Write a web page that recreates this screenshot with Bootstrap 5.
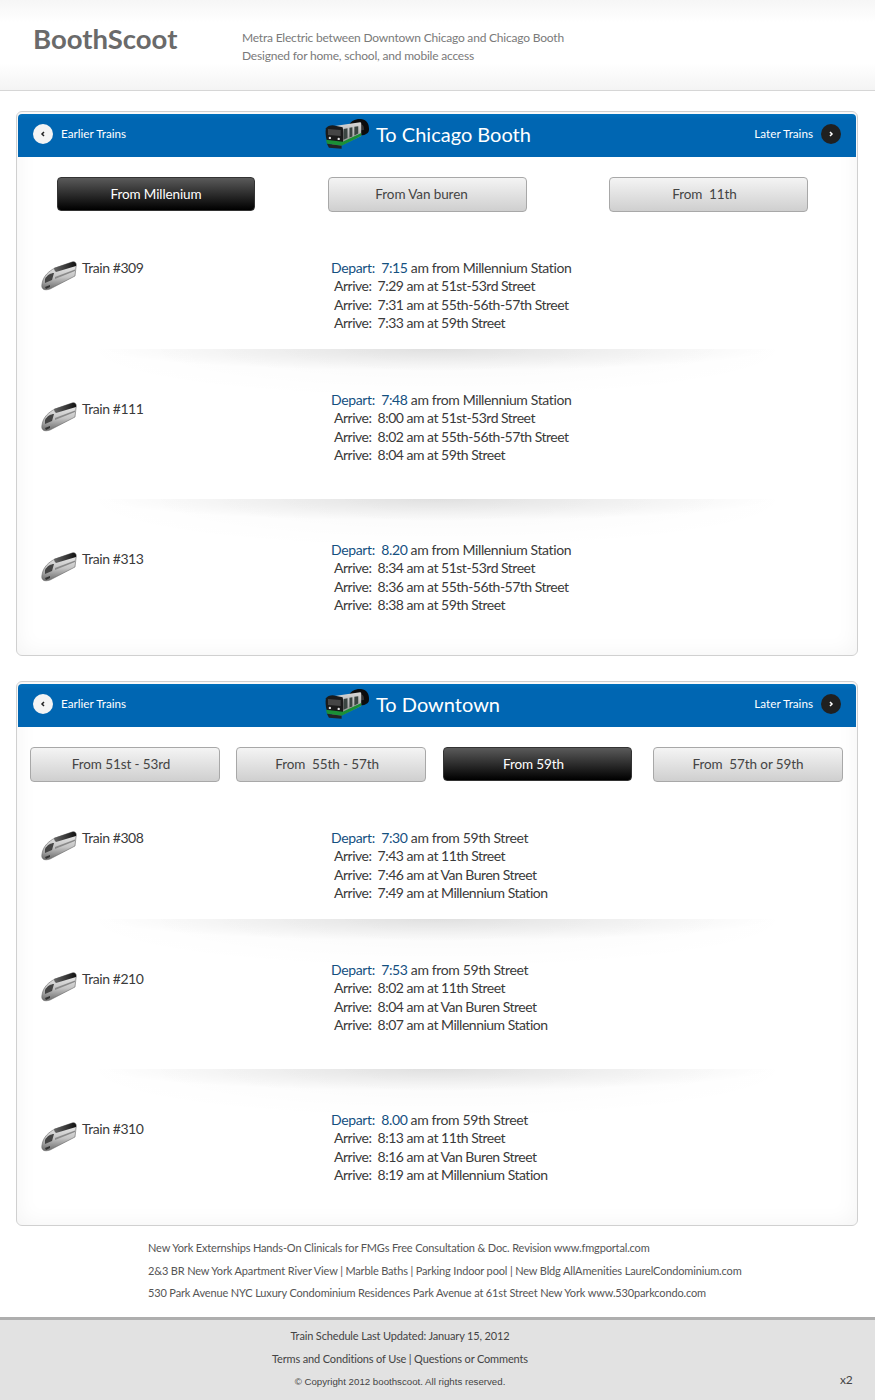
<!DOCTYPE html>
<html lang="en">
<head>
  <meta charset="UTF-8" />
  <meta name="viewport" content="width=device-width, initial-scale=1" />
  <title>BoothScoot</title>
  <link href="https://cdn.jsdelivr.net/npm/bootstrap@5.3.0/dist/css/bootstrap.min.css" rel="stylesheet" />
  <style>
    body {
      font-family: Lato, "Open Sans", sans-serif;
      color: #3a3a3a;
      background: #fff;
    }
    .site-head {
      height: 91px;
      padding: 0 0 0 33px;
      background: linear-gradient(to bottom, #f6f6f6, #fff 25%, #fff 70%, #f4f4f4);
      border-bottom: 1px solid #d6d6d6;
    }
    .brand {
      width: 209px;
      margin-bottom: 12px;
      font-size: 27.5px;
      font-weight: 700;
      color: #6a6a6a;
    }
    .tagline {
      margin-top: 4px;
      font-size: 12px;
      line-height: 18.4px;
      letter-spacing: -.2px;
      color: #7a7a7a;
    }
    .panel {
      height: 545px;
      margin: 20px 17px 0 16px;
      padding: 2px 1px;
      border: 1px solid #d0d0d0;
      border-radius: 6px;
      box-shadow: inset 0 0 22px rgba(0, 0, 0, .05);
    }
    .panel + .panel {
      margin-top: 25px;
    }
    .bar {
      height: 43px;
      padding: 0 15px 3px;
      color: #fff;
      background: linear-gradient(to bottom, #0070bd, #0066b2 15%);
      border-radius: 4px 4px 0 0;
    }
    .bar-link {
      width: 150px;
      font-size: 11.7px;
      gap: 8px;
    }
    .arrow {
      width: 20px;
      height: 20px;
    }
    .bar-title {
      margin-left: 142px;
      font-size: 20px;
      gap: 6px;
    }
    .tram {
      width: 45px;
      height: 32px;
    }
    .choice {
      height: 35px;
      padding: 0;
      font-size: 13.5px;
      line-height: 27px;
      letter-spacing: -.1px;
      white-space: pre;
      color: #444;
      background: linear-gradient(to bottom, #f4f4f4, #cfcfcf);
      border: 1px solid #a8a8a8;
      border-radius: 4px;
    }
    .choice.on {
      height: 34px;
      margin-right: 1px;
      color: #fff;
      background: linear-gradient(to bottom, #5a5a5a, #000);
      border-color: #333;
    }
    .choice.shift-l { padding-right: 12px; }
    .choice.shift-m { padding-right: 8px; }
    .choices {
      margin-top: 20px;
    }
    .w-big { width: 199px; }
    .w-med { width: 190px; }
    .w-big.on { width: 198px; }
    .w-med.on { width: 189px; }
    .ml-39 { margin-left: 39px; }
    .ml-72 { margin-left: 72px; }
    .ml-82 { margin-left: 82px; }
    .ml-12 { margin-left: 12px; }
    .ml-16 { margin-left: 16px; }
    .ml-17 { margin-left: 17px; }
    .ml-20 { margin-left: 20px; }
    .trip {
      padding: 42px 0 0 23px;
      height: 150px;
      font-size: 14px;
      line-height: 18.4px;
      letter-spacing: -.45px;
      background:
        radial-gradient(ellipse 40% 22px at 50% 0, rgba(0, 0, 0, .1), transparent),
        radial-gradient(ellipse 44% 50px at 50% 0, rgba(0, 0, 0, .025), transparent);
    }
    .trip.first {
      height: 137px;
      padding-top: 47px;
      background: none;
    }
    .trip.last {
      height: 156px;
    }
    .who {
      width: 290px;
      margin-top: 9px;
      gap: 5px;
    }
    .first .who {
      margin-top: 0;
    }
    .bullet {
      width: 36px;
      height: 30px;
      margin-top: 2px;
    }
    .leave {
      color: #14507f;
    }
    .stops div {
      white-space: pre;
      letter-spacing: -.5px;
    }
    .stops div:first-child {
      letter-spacing: -.37px;
    }
    .stops div + div {
      padding-left: 3px;
    }
    .promo {
      padding: 11px 0 0 148px;
      font-size: 11px;
      line-height: 22.5px;
      letter-spacing: -.15px;
      color: #555;
    }
    .site-foot {
      height: 83px;
      margin-top: 12px;
      padding-top: 4px;
      font-size: 11px;
      line-height: 23px;
      letter-spacing: -.15px;
      color: #444;
      background: #e2e2e2;
      border-top: 3px solid #aeaeae;
    }
    .foot-text {
      width: 800px;
    }
    .copy {
      font-family: "Liberation Sans", sans-serif;
      font-size: 9.7px;
      letter-spacing: 0;
    }
    .x-two {
      padding: 0 0 9px 40px;
      font-size: 12px;
    }
  </style>
</head>
<body>

<svg width="0" height="0" class="d-block">
  <defs>
    <linearGradient id="silver" x1="0" y1="0" x2="0" y2="1">
      <stop offset="0" stop-color="#f2f2f2" />
      <stop offset=".55" stop-color="#c4c4c4" />
      <stop offset="1" stop-color="#6a6a6a" />
    </linearGradient>
    <linearGradient id="roof" x1="0" y1="0" x2="1" y2="0">
      <stop offset="0" stop-color="#666" />
      <stop offset="1" stop-color="#111" />
    </linearGradient>
    <linearGradient id="tramside" x1="0" y1="0" x2="0" y2="1">
      <stop offset="0" stop-color="#d8d8d8" />
      <stop offset="1" stop-color="#8a8a8a" />
    </linearGradient>
  </defs>
  <symbol id="bullet" viewBox="0 0 36 30">
    <path d="M1 23C2 15 8 10 14 7L31 1C35 0 36 3 35 6L34 15L9 28C3 30 0 28 1 23Z" fill="url(#silver)" stroke="#666" stroke-width=".6" />
    <path d="M13 7L31 1C34.500 0 35.500 3 35 5L15 11C14 10 13 9 13 7Z" fill="url(#roof)" />
    <path d="M4 18C6 14 10 12 13 12L11 19L4 22Z" fill="#444" />
    <path d="M14 16L34 8.500L34 10L14 18Z" fill="#8a8a8a" />
    <path d="M4 26L9 24L9 26L5 28Z" fill="#333" />
  </symbol>
  <symbol id="tram" viewBox="0 0 46 32">
    <path d="M24 19V8C26 2 33 0 38 1C43 2 45 6 45 11C45 15 43 16 40 17Z" fill="#0c0c0c" />
    <path d="M30 13V9C31 6 35 5 37 6C40 7 40 10 40 12Z" fill="#333" />
    <path d="M8 8L36 4C37 4 37 5 37 6V18L16 28L7 27Z" fill="url(#tramside)" />
    <path d="M19 11L23 10V20L19 22ZM25 9.500L28 9V18.500L25 19.500ZM30 8.500L34 8V15.500L30 17.500Z" fill="#3a4541" />
    <path d="M1 10C2 8 5 7 8 7L18 9C19 12 19 22 18 27L3 25C1 22 0 14 1 10Z" fill="#1a1a1a" />
    <path d="M3 11L16 12L16 18L3 17Z" fill="#454545" />
    <path d="M1 22L18 24L37 15V18L17 28L2 26Z" fill="#1a8f36" />
    <path d="M2 26L17 28L17 31L4 30Z" fill="#222" />
    <circle cx="5" cy="20" r="1.200" fill="#ddd" />
    <circle cx="14" cy="21" r="1.200" fill="#ddd" />
  </symbol>
  <symbol id="prev" viewBox="0 0 20 20">
    <circle cx="10" cy="10" r="10" fill="#f4f4f4" />
    <path d="M11 8L9 10L11 12" fill="none" stroke="#222" stroke-width="1.500" />
  </symbol>
  <symbol id="next" viewBox="0 0 20 20">
    <circle cx="10" cy="10" r="10" fill="#202020" />
    <path d="M9 8L11 10L9 12" fill="none" stroke="#fff" stroke-width="1.500" />
  </symbol>
</svg>

<header class="site-head d-flex align-items-center">
  <div class="brand">BoothScoot</div>
  <div class="tagline">Metra Electric between Downtown Chicago and Chicago Booth<br>Designed for home, school, and mobile access</div>
</header>

<!-- To Chicago Booth -->
<section class="panel">
  <div class="bar d-flex align-items-center">
    <div class="bar-link d-flex align-items-center"><svg class="arrow"><use href="#prev" /></svg>Earlier Trains</div>
    <div class="bar-title d-flex align-items-center"><svg class="tram"><use href="#tram" /></svg>To Chicago Booth</div>
    <div class="bar-link d-flex align-items-center justify-content-end ms-auto">Later Trains<svg class="arrow"><use href="#next" /></svg></div>
  </div>
  <div class="choices d-flex align-items-start">
    <button class="btn choice on w-big ml-39">From Millenium</button>
    <button class="btn choice shift-l w-big ml-72">From Van buren</button>
    <button class="btn choice shift-m w-big ml-82">From  11th</button>
  </div>

  <div class="trip first d-flex">
    <div class="who d-flex align-items-start"><svg class="bullet"><use href="#bullet" /></svg>Train #309</div>
    <div class="stops">
      <div><span class="leave">Depart:  7:15</span> am from Millennium Station</div>
      <div>Arrive:  7:29 am at 51st-53rd Street</div>
      <div>Arrive:  7:31 am at 55th-56th-57th Street</div>
      <div>Arrive:  7:33 am at 59th Street</div>
    </div>
  </div>
  <div class="trip d-flex">
    <div class="who d-flex align-items-start"><svg class="bullet"><use href="#bullet" /></svg>Train #111</div>
    <div class="stops">
      <div><span class="leave">Depart:  7:48</span> am from Millennium Station</div>
      <div>Arrive:  8:00 am at 51st-53rd Street</div>
      <div>Arrive:  8:02 am at 55th-56th-57th Street</div>
      <div>Arrive:  8:04 am at 59th Street</div>
    </div>
  </div>
  <div class="trip last d-flex">
    <div class="who d-flex align-items-start"><svg class="bullet"><use href="#bullet" /></svg>Train #313</div>
    <div class="stops">
      <div><span class="leave">Depart:  8.20</span> am from Millennium Station</div>
      <div>Arrive:  8:34 am at 51st-53rd Street</div>
      <div>Arrive:  8:36 am at 55th-56th-57th Street</div>
      <div>Arrive:  8:38 am at 59th Street</div>
    </div>
  </div>
</section>

<!-- To Downtown -->
<section class="panel">
  <div class="bar d-flex align-items-center">
    <div class="bar-link d-flex align-items-center"><svg class="arrow"><use href="#prev" /></svg>Earlier Trains</div>
    <div class="bar-title d-flex align-items-center"><svg class="tram"><use href="#tram" /></svg>To Downtown</div>
    <div class="bar-link d-flex align-items-center justify-content-end ms-auto">Later Trains<svg class="arrow"><use href="#next" /></svg></div>
  </div>
  <div class="choices d-flex align-items-start">
    <button class="btn choice shift-m w-med ml-12">From 51st - 53rd</button>
    <button class="btn choice shift-m w-med ml-16">From  55th - 57th</button>
    <button class="btn choice on shift-m w-med ml-17">From 59th</button>
    <button class="btn choice w-med ml-20">From  57th or 59th</button>
  </div>

  <div class="trip first d-flex">
    <div class="who d-flex align-items-start"><svg class="bullet"><use href="#bullet" /></svg>Train #308</div>
    <div class="stops">
      <div><span class="leave">Depart:  7:30</span> am from 59th Street</div>
      <div>Arrive:  7:43 am at 11th Street</div>
      <div>Arrive:  7:46 am at Van Buren Street</div>
      <div>Arrive:  7:49 am at Millennium Station</div>
    </div>
  </div>
  <div class="trip d-flex">
    <div class="who d-flex align-items-start"><svg class="bullet"><use href="#bullet" /></svg>Train #210</div>
    <div class="stops">
      <div><span class="leave">Depart:  7:53</span> am from 59th Street</div>
      <div>Arrive:  8:02 am at 11th Street</div>
      <div>Arrive:  8:04 am at Van Buren Street</div>
      <div>Arrive:  8:07 am at Millennium Station</div>
    </div>
  </div>
  <div class="trip last d-flex">
    <div class="who d-flex align-items-start"><svg class="bullet"><use href="#bullet" /></svg>Train #310</div>
    <div class="stops">
      <div><span class="leave">Depart:  8.00</span> am from 59th Street</div>
      <div>Arrive:  8:13 am at 11th Street</div>
      <div>Arrive:  8:16 am at Van Buren Street</div>
      <div>Arrive:  8:19 am at Millennium Station</div>
    </div>
  </div>
</section>

<div class="promo">
  <div>New York Externships Hands-On Clinicals for FMGs Free Consultation &amp; Doc. Revision www.fmgportal.com</div>
  <div>2&amp;3 BR New York Apartment River View | Marble Baths | Parking Indoor pool | New Bldg AllAmenities LaurelCondominium.com</div>
  <div>530 Park Avenue NYC Luxury Condominium Residences Park Avenue at 61st Street New York www.530parkcondo.com</div>
</div>

<footer class="site-foot d-flex">
  <div class="foot-text text-center">
    <div>Train Schedule Last Updated: January 15, 2012</div>
    <div>Terms and Conditions of Use | Questions or Comments</div>
    <div class="copy">© Copyright 2012 boothscoot. All rights reserved.</div>
  </div>
  <div class="x-two align-self-end">x2</div>
</footer>

<script src="https://cdn.jsdelivr.net/npm/bootstrap@5.3.0/dist/js/bootstrap.bundle.min.js"></script>
</body>
</html>
